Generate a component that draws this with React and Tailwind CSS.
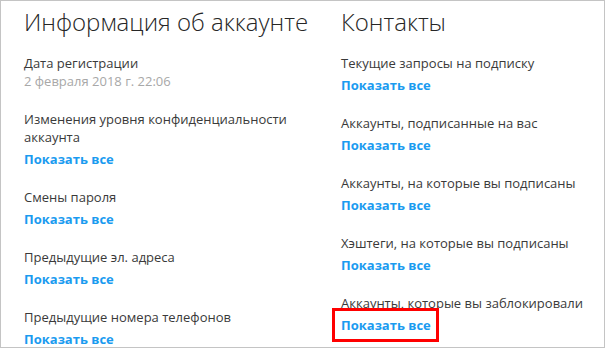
const font = { fontFamily: '"Open Sans", "Noto Sans", sans-serif' };

function Item({ label, lines, date }) {
  return (
    <div className="flex flex-col">
      {(lines || [label]).map((l) => (
        <div key={l} className="text-[13px] leading-[18px] text-[#3a3a3a]">{l}</div>
      ))}
      {date ? (
        <div className="text-[13px] leading-[18px] text-[#a8a8a8]">{date}</div>
      ) : (
        <a href="#" className="mt-1 text-[13px] leading-[18px] font-bold text-[#1a9bf0]">Показать все</a>
      )}
    </div>
  );
}

export default function App() {
  return (
    <div style={font} className="w-[605px] h-[348px] overflow-hidden bg-white border border-[#c4c4c4] flex">
      <div className="w-[340px] pl-[23px] pt-[5px] flex flex-col">
        <h1 className="text-[24px] leading-[32px] font-light text-[#262626] whitespace-nowrap">Информация об аккаунте</h1>
        <div className="mt-[16px] flex flex-col gap-5">
          <Item label="Дата регистрации" date="2 февраля 2018 г. 22:06" />
          <Item lines={['Изменения уровня конфиденциальности', 'аккаунта']} />
          <Item label="Смены пароля" />
          <Item label="Предыдущие эл. адреса" />
          <Item label="Предыдущие номера телефонов" />
        </div>
      </div>
      <div className="flex-1 pt-[5px] flex flex-col">
        <h1 className="text-[24px] leading-[32px] font-light text-[#262626]">Контакты</h1>
        <div className="mt-[16px] flex flex-col gap-5">
          <Item label="Текущие запросы на подписку" />
          <Item label="Аккаунты, подписанные на вас" />
          <Item label="Аккаунты, на которые вы подписаны" />
          <Item label="Хэштеги, на которые вы подписаны" />
          <div className="relative">
            <Item label="Аккаунты, которые вы заблокировали" />
            <div className="absolute left-[-9px] top-[14px] w-[107px] h-[34px] border-[3px] border-[#ff0000]" />
          </div>
        </div>
      </div>
    </div>
  );
}
